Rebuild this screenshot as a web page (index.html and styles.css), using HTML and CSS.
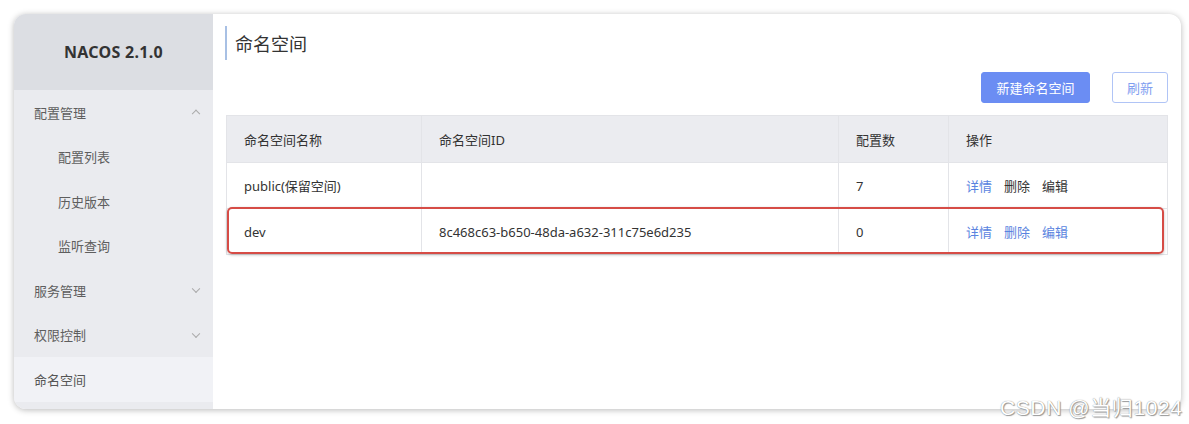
FILE: index.html
```html
<!DOCTYPE html>
<html lang="zh">
<head>
<meta charset="utf-8">
<link rel="stylesheet" href="styles.css">
</head>
<body>
<div class="frame">
  <aside class="sidebar">
    <div class="brand">NACOS 2.1.0</div>
    <ul class="menu">
      <li class="item group">配置管理<span class="chev up"></span></li>
      <li class="item sub">配置列表</li>
      <li class="item sub">历史版本</li>
      <li class="item sub">监听查询</li>
      <li class="item group">服务管理<span class="chev"></span></li>
      <li class="item group">权限控制<span class="chev"></span></li>
      <li class="item active">命名空间</li>
    </ul>
  </aside>
  <main class="main">
    <h1 class="title">命名空间</h1>
    <div class="toolbar">
      <button class="btn primary">新建命名空间</button>
      <button class="btn ghost">刷新</button>
    </div>
    <div class="table-wrap">
      <table class="grid">
        <colgroup><col class="c1"><col class="c2"><col class="c3"><col class="c4"></colgroup>
        <thead>
          <tr><th>命名空间名称</th><th>命名空间ID</th><th>配置数</th><th>操作</th></tr>
        </thead>
        <tbody>
          <tr><td>public(保留空间)</td><td></td><td>7</td><td><a class="lk blue">详情</a><a class="lk">删除</a><a class="lk">编辑</a></td></tr>
          <tr><td>dev</td><td>8c468c63-b650-48da-a632-311c75e6d235</td><td>0</td><td><a class="lk blue">详情</a><a class="lk blue">删除</a><a class="lk blue">编辑</a></td></tr>
        </tbody>
      </table>
      <div class="highlight"></div>
    </div>
  </main>
</div>
<div class="watermark">CSDN @当归1024</div>
</body>
</html>
```
FILE: styles.css
```css
* { box-sizing: border-box; }
html, body { margin: 0; padding: 0; background: #fff; }
body {
  width: 1189px; height: 424px; overflow: hidden; position: relative;
  font-family: "Noto Sans", "Noto Sans CJK SC", sans-serif;
  color: #333;
}
.frame {
  margin: 14px 0 0 14px;
  width: 1167px; height: 395px;
  display: flex;
  border-radius: 12px;
  overflow: hidden;
  box-shadow: 0 1px 6px rgba(0,0,0,0.28);
  background: #fff;
}
.sidebar {
  width: 199px; flex: none;
  background: #eaebef;
  display: flex; flex-direction: column;
}
.brand {
  height: 76px; flex: none;
  background: #dcdee3;
  display: flex; align-items: center; justify-content: center;
  font-size: 16px; font-weight: 700; color: #333;
  letter-spacing: 0.3px;
}
.menu { list-style: none; margin: 0; padding: 0; flex: 1; }
.item {
  height: 44.5px; display: flex; align-items: center;
  padding-left: 20px; padding-right: 16px;
  font-size: 13px; color: #5e5e5e;
  position: relative;
}
.item.sub { padding-left: 44px; }
.item.active { background: #f1f2f6; color: #555; }
.chev {
  position: absolute; right: 14px; top: 50%;
  width: 6px; height: 6px;
  border-right: 1px solid #aaa; border-bottom: 1px solid #aaa;
  transform: translateY(-70%) rotate(45deg);
}
.chev.up { transform: translateY(-20%) rotate(-135deg); }
.main { flex: 1; padding: 12px 14px 0 13px; display: flex; flex-direction: column; }
.title {
  margin: 0 0 0 -1px; height: 34px;
  border-left: 2px solid #a8c0e4;
  padding-left: 8px;
  font-size: 18px; font-weight: 400; color: #333;
  display: flex; align-items: center;
}
.toolbar { display: flex; justify-content: flex-end; gap: 22px; margin-top: 12px; }
.btn {
  height: 31px; border-radius: 3px; font-family: inherit; font-size: 13px;
  padding: 0; cursor: pointer;
}
.btn.primary { width: 109px; background: #6b8df3; border: 1px solid #6b8df3; color: #fff; }
.btn.ghost { width: 56px; background: #fff; border: 1px solid #b0c4f6; color: #7f9ef0; }
.table-wrap { position: relative; margin-top: 12px; }
.grid {
  width: 941px; border-collapse: collapse; table-layout: fixed;
  font-size: 13px; color: #333;
}
.c1 { width: 195px; } .c2 { width: 417px; } .c3 { width: 110px; } .c4 { width: 219px; }
.grid th, .grid td {
  border: 1px solid #e3e4e8; text-align: left; padding: 0 0 0 17px;
  font-weight: 400;
}
.grid th { height: 47px; background: #ebecf0; color: #333; }
.grid td { height: 46px; }
.lk { color: #333; margin-right: 12px; }
.lk.blue { color: #5a84e0; }
.highlight {
  position: absolute; left: 1px; top: 92px; width: 937px; height: 47px;
  border: 2px solid #d64c46; border-radius: 5px;
  box-shadow: 0 1px 3px rgba(0,0,0,0.25);
  pointer-events: none;
}
.watermark {
  position: absolute; left: 1000px; top: 391px;
  font-family: "Liberation Sans", "Noto Sans CJK SC", sans-serif;
  font-size: 21px; color: #fff; letter-spacing: 0.6px;
  text-shadow: 0 0 1px #777, 1px 1px 1px #999;
}
```
